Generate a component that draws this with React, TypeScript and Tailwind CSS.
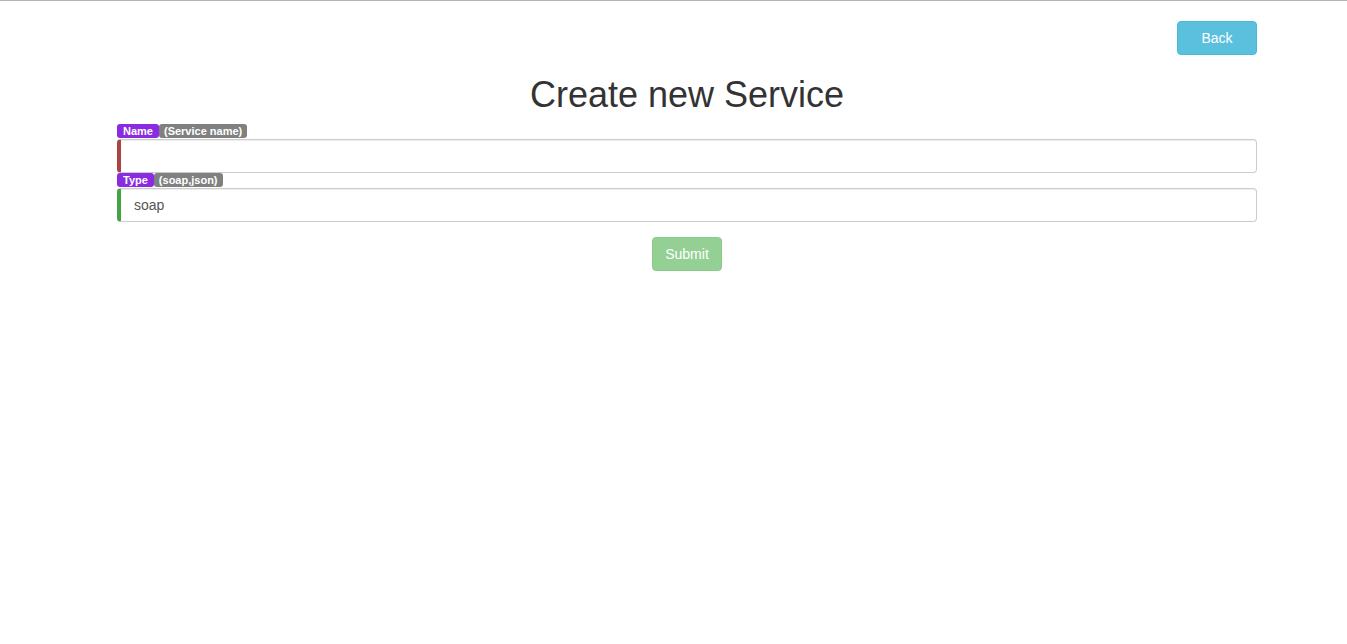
import React from 'react'

// Bootstrap-3 flavoured "create service" form

type FieldProps = {
  label: string
  hint: string
  value?: string
  valid: boolean
}

function Field({ label, hint, value, valid }: FieldProps) {
  return (
    <div className="flex flex-col">
      <div className="flex h-[14px] items-center text-[11px] font-bold leading-none text-white">
        <span className="flex h-[14px] items-center rounded-[3px] bg-[#8a2be2] px-[6px]">{label}</span>
        <span className="flex h-[14px] items-center rounded-[3px] bg-[#808080] px-[5px]">{hint}</span>
      </div>
      <input
        readOnly
        value={value ?? ''}
        className={[
          'mt-px h-[34px] w-full rounded-[4px] border border-l-4 border-[#cccccc] bg-white pr-3 pl-[13px] text-[14px] text-[#555555] shadow-[inset_0_1px_1px_rgba(0,0,0,0.075)] outline-none',
          valid ? 'border-l-[#42a342]' : 'border-l-[#a94442]',
        ].join(' ')}
      />
    </div>
  )
}

export default function App() {
  return (
    <div
      className="min-h-screen border-t border-[#b3b3b3] bg-white text-[#333333]"
      style={{ fontFamily: '"Liberation Sans", Arial, Helvetica, sans-serif' }}
    >
      <div className="ml-[117px] w-[1140px] pt-5">
        <div className="flex justify-end">
          <button
            type="button"
            className="h-[34px] w-[80px] rounded-[4px] border border-[#46b8da] bg-[#5bc0de] text-[14px] text-white"
          >
            Back
          </button>
        </div>

        <h1 className="mt-[20px] text-center text-[36px] leading-[40px] font-normal">Create new Service</h1>

        <form className="mt-[9px] flex flex-col">
          <Field label="Name" hint="(Service name)" valid={false} />
          <Field label="Type" hint="(soap,json)" value="soap" valid />
          <div className="mt-[15px] flex justify-center">
            <button
              type="button"
              className="h-[34px] w-[70px] rounded-[4px] border border-[#4cae4c] bg-[#5cb85c] text-[14px] text-white opacity-65"
            >
              Submit
            </button>
          </div>
        </form>
      </div>
    </div>
  )
}
